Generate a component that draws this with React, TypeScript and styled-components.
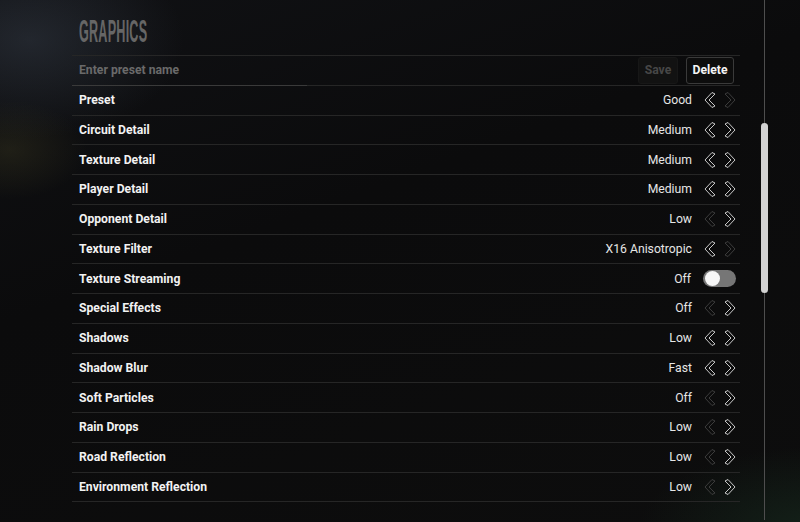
import styled, { createGlobalStyle } from "styled-components"

const Global = createGlobalStyle`
    html, body {
        margin:0;
        padding:0;
        background:#0c0c0d;
    }
    body {
        font-family:Roboto, "Liberation Sans", sans-serif;
    }
`

const Page = styled.div`
    width:800px;
    height:522px;
    overflow:hidden;
    display:flex;
    background:
        radial-gradient(ellipse 110px 70px at 10px 150px, rgba(95,90,45,0.22), transparent 70%),
        radial-gradient(ellipse 220px 140px at 30px 40px, rgba(70,80,95,0.35), transparent 70%),
        radial-gradient(ellipse 260px 120px at 820px 530px, rgba(25,50,35,0.55), transparent 70%),
        linear-gradient(160deg, #101114 0%, #0b0b0c 40%, #0d0d0d 100%);
`

const Panel = styled.div`
    width:668px;
    margin-left:72px;
    display:flex;
    flex-direction:column;
`

const Header = styled.div`
    height:56px;
    box-sizing:border-box;
    border-bottom:1px solid #262626;
    padding-left:7px;
    display:flex;
    align-items:flex-end;
    overflow:hidden;
`

const Title = styled.h1`
    margin:0 0 11px 0;
    font-family:"Liberation Sans Narrow", "Liberation Sans", sans-serif;
    font-weight:700;
    font-size:28px;
    line-height:22px;
    color:#666;
    transform:scale(0.45, 1.1);
    transform-origin:left bottom;
    white-space:nowrap;
    letter-spacing:0.5px;
`

const Row = styled.div`
    height:29.75px;
    box-sizing:border-box;
    border-bottom:1px solid #262626;
    display:flex;
    align-items:center;
    justify-content:space-between;
    padding:0 4px 0 7px;
`

const PresetRow = styled(Row)`
    padding-right:6px;
    align-items:stretch;
    padding-left:0;
`

const NameInput = styled.input`
    width:228px;
    margin-bottom:-1px;
    border:none;
    border-bottom:1px solid #3a3a3a;
    background:transparent;
    outline:none;
    padding:0 0 0 7px;
    font-family:Roboto, "Liberation Sans", sans-serif;
    font-weight:700;
    font-size:12.2px;
    color:#ddd;
    &::placeholder { color:#6a6a6a; }
`

const Buttons = styled.div`
    display:flex;
    gap:8px;
    padding:1px 0 1px;
`

const Button = styled.button<{ $disabled?: boolean }>`
    font-family:Roboto, "Liberation Sans", sans-serif;
    font-weight:700;
    font-size:12.2px;
    padding:0;
    border-radius:3px;
    color:${p => p.$disabled ? "#474747" : "#f4f4f4"};
    background:${p => p.$disabled ? "#121212" : "#0d0d0d"};
    border:1px solid ${p => p.$disabled ? "#171717" : "#3a3a3a"};
    width:${p => p.$disabled ? "40px" : "48px"};
`

const Label = styled.span`
    font-weight:700;
    font-size:12.2px;
    color:#f2f2f2;
`

const Controls = styled.div`
    display:flex;
    align-items:center;
`

const Value = styled.span`
    font-size:12.2px;
    color:#e6e6e6;
    margin-right:12px;
`

const Arrows = styled.div`
    display:flex;
    gap:8px;
`

const Arrow = styled.svg<{ $on: boolean }>`
    width:12px;
    height:18px;
    display:block;
    stroke:${p => p.$on ? "#c8c8c8" : "#3c3c3c"};
`

const Toggle = styled.div`
    width:33px;
    height:17px;
    border-radius:9px;
    background:#767676;
    display:flex;
    align-items:center;
    padding-left:2px;
    box-sizing:border-box;
`

const Knob = styled.div`
    width:15px;
    height:15px;
    border-radius:50%;
    background:#f6f6f6;
`

const Track = styled.div`
    margin-left:21px;
    width:7px;
    display:flex;
    flex-direction:column;
    align-items:center;
    padding-bottom:2px;
`

const Line = styled.div<{ $h?: number }>`
    width:1px;
    background:#4e4e4e;
    height:${p => p.$h ? p.$h + "px" : "auto"};
    flex:${p => p.$h ? "none" : "1"};
`

const Thumb = styled.div`
    width:7px;
    height:170px;
    border-radius:4px;
    background:#d2d2d2;
`

function Chevron({ dir, on }: { dir: "l" | "r", on: boolean }) {
    const pts = dir === "l"
        ? "1,9 8,1.5 11,3 5,9 11,15 8,16.5"
        : "11,9 4,1.5 1,3 7,9 1,15 4,16.5"
    return (
        <Arrow $on={on} viewBox="0 0 12 18" fill="none" strokeWidth="1" strokeLinejoin="round">
            <polygon points={pts} />
        </Arrow>
    )
}

type Setting = { label: string, value: string, prev?: boolean, next?: boolean, toggle?: boolean }

const settings: Setting[] = [
    { label: "Preset", value: "Good", prev: true, next: false },
    { label: "Circuit Detail", value: "Medium", prev: true, next: true },
    { label: "Texture Detail", value: "Medium", prev: true, next: true },
    { label: "Player Detail", value: "Medium", prev: true, next: true },
    { label: "Opponent Detail", value: "Low", prev: false, next: true },
    { label: "Texture Filter", value: "X16 Anisotropic", prev: true, next: false },
    { label: "Texture Streaming", value: "Off", toggle: true },
    { label: "Special Effects", value: "Off", prev: false, next: true },
    { label: "Shadows", value: "Low", prev: true, next: true },
    { label: "Shadow Blur", value: "Fast", prev: true, next: true },
    { label: "Soft Particles", value: "Off", prev: false, next: true },
    { label: "Rain Drops", value: "Low", prev: false, next: true },
    { label: "Road Reflection", value: "Low", prev: false, next: true },
    { label: "Environment Reflection", value: "Low", prev: false, next: true },
]

export default function App(){
    return(
        <>
        <Global/>
        <Page>
            <Panel>
                <Header>
                    <Title>GRAPHICS</Title>
                </Header>
                <PresetRow>
                    <NameInput placeholder="Enter preset name"/>
                    <Buttons>
                        <Button $disabled>Save</Button>
                        <Button>Delete</Button>
                    </Buttons>
                </PresetRow>
                {settings.map(s => (
                    <Row key={s.label}>
                        <Label>{s.label}</Label>
                        <Controls>
                            <Value>{s.value}</Value>
                            {s.toggle ? (
                                <Toggle><Knob/></Toggle>
                            ) : (
                                <Arrows>
                                    <Chevron dir="l" on={!!s.prev}/>
                                    <Chevron dir="r" on={!!s.next}/>
                                </Arrows>
                            )}
                        </Controls>
                    </Row>
                ))}
            </Panel>
            <Track>
                <Line $h={123}/>
                <Thumb/>
                <Line/>
            </Track>
        </Page>
        </>
    )
}
